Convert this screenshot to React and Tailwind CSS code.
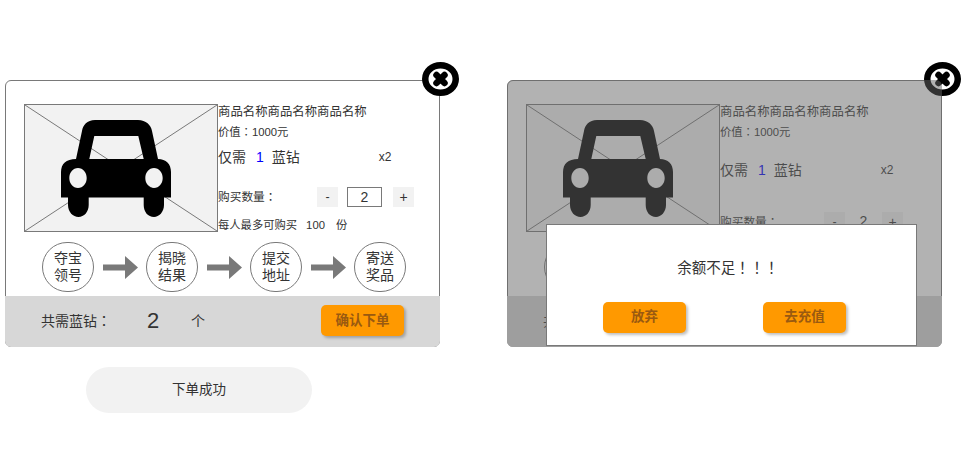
import React from 'react';

const steps = [
  ['夺宝', '领号'],
  ['揭晓', '结果'],
  ['提交', '地址'],
  ['寄送', '奖品'],
];

// the reference's full-width punctuation sits centred in its cell
const Punct = ({ children }) => <span className="font-['Noto_Sans_CJK_TC',sans-serif]">{children}</span>;

function CloseIcon() {
  return (
    <svg viewBox="0 0 37 34" className="absolute left-[416px] top-[-19px] w-[37px] h-[34px]">
      <ellipse cx="18.5" cy="17" rx="15.25" ry="13.75" fill="#fff" stroke="#000" strokeWidth="6.5" />
      <path d="M14.5 13 L22.5 21 M22.5 13 L14.5 21" stroke="#000" strokeWidth="6.5" strokeLinecap="round" />
    </svg>
  );
}

function ImagePlaceholder() {
  return (
    <div className="relative w-[194px] h-[128px] shrink-0 bg-[#f2f2f2] border border-[#797979]">
      <svg viewBox="0 0 192 126" preserveAspectRatio="none" className="absolute inset-0 w-full h-full">
        <path d="M0 0 L192 126 M192 0 L0 126" stroke="#797979" strokeWidth="1" fill="none" />
      </svg>
      <svg viewBox="0 0 194 128" className="absolute left-[-1px] top-[-1px] w-[194px] h-[128px]">
        <path
          fillRule="evenodd"
          fill="#000"
          d="M71 16 H114 C122 16 127 21 128 27 L134 55 C142 55 147 60 147 68 V93.5 H140 V101 C140 108 135 113 130 113 C124 113 119.7 108 119.7 101 V93.5 H64.7 V101 C64.7 108 60 113 54.5 113 C49 113 44 108 44 101 V93.5 H37 V68 C37 60 42 55 52 55 L58 27 C59 21 63 16 71 16 Z M70.3 32 L65.3 55 H119.7 L114.3 32 Z M54 64 C49 64 45.3 68.5 45.3 74 C45.3 79.5 49 84 54 84 C59 84 62.7 79.5 62.7 74 C62.7 68.5 59 64 54 64 Z M130 64 C125 64 121.3 68.5 121.3 74 C121.3 79.5 125 84 130 84 C135 84 138.7 79.5 138.7 74 C138.7 68.5 135 64 130 64 Z"
        />
      </svg>
    </div>
  );
}

function Arrow() {
  return (
    <svg viewBox="0 0 35 23" className="w-[35px] h-[23px] shrink-0">
      <path d="M0 8.5 H22 V0 L35 11.5 L22 23 V14.5 H0 Z" fill="#797979" />
    </svg>
  );
}

function OrderButton({ children }) {
  return (
    <button className="w-[83px] h-[31px] rounded-[5px] bg-[#ff9900] shadow-[2px_2px_3px_rgba(0,0,0,0.25)] text-[13.5px] font-bold text-[#9a5a10]">
      {children}
    </button>
  );
}

function OrderCard({ dimmed }) {
  return (
    <div className="relative w-[435px] h-[267px] rounded-[6px] border border-[#797979] bg-white text-[#333]">
      <div className="flex pt-[23px] pl-[18px] h-[160px]">
        <ImagePlaceholder />
        <div className="flex-1 text-[12.4px]">
          <div className="h-[19px] leading-[16px]">商品名称商品名称商品名称</div>
          <div className="h-[19px] leading-[16px] text-[11.3px]">价值<Punct>：</Punct>1000元</div>
          <div className={`flex items-center h-[26px] text-sm ${dimmed ? 'mt-[15px]' : 'mt-[2px]'}`}>
            <span>仅需</span>
            <span className="ml-[10px] text-[#0000ff]">1</span>
            <span className="ml-[8px]">蓝钻</span>
            <span className="ml-[79px] text-xs">x2</span>
          </div>
          <div className={`flex items-center h-[20px] ${dimmed ? 'mt-[29px]' : 'mt-[17px]'}`}>
            <span className={`leading-[18px] self-start text-[11.7px] ${dimmed ? 'w-[104px]' : 'w-[99px]'}`}>购买数量<Punct>：</Punct></span>
            <span className="w-[21px] h-[20px] bg-[#f2f2f2] text-center leading-[20px]">-</span>
            {dimmed ? (
              <span className="w-[37px] h-[20px] text-center text-sm leading-[18px]">2</span>
            ) : (
              <span className="w-[35px] h-[20px] ml-[9px] mr-[11px] text-center text-sm leading-[18px] border border-[#797979]">2</span>
            )}
            <span className="w-[21px] h-[20px] bg-[#f2f2f2] text-center text-sm leading-[20px]">+</span>
          </div>
          <div className="mt-[8px] flex h-[20px] items-center text-[11.3px]">
            <span>每人最多可购买</span>
            <span className="ml-[9px]">100</span>
            <span className="ml-[11px]">份</span>
          </div>
        </div>
      </div>
      <div className="flex items-center h-[52px] pl-[36px]">
        {steps.map((s, i) => (
          <React.Fragment key={s[0]}>
            {i > 0 && <div className="ml-[9px] mr-[8px]"><Arrow /></div>}
            <div className="w-[52px] h-[50px] shrink-0 rounded-full border border-[#797979] text-center text-sm leading-[17px] flex flex-col justify-center">
              <span>{s[0]}</span>
              <span>{s[1]}</span>
            </div>
          </React.Fragment>
        ))}
      </div>
      <div className="absolute -left-px -right-px -bottom-px h-[51px] rounded-b-[6px] bg-[#d7d7d7] flex items-center pl-[36px] pr-[36px] pb-[2px] text-sm">
        <span className="w-[106px]">共需蓝钻<Punct>：</Punct></span>
        <span className="w-[44px] text-[22px]">2</span>
        <span>个</span>
        <div className="ml-auto"><OrderButton>确认下单</OrderButton></div>
      </div>
      <CloseIcon />
      {dimmed && (
        <>
          <div className="absolute -inset-px rounded-[6px] bg-[#666666]/50" />
          <div className="absolute left-[38px] top-[143px] w-[371px] h-[122px] border border-[#797979] bg-white">
            <div className="pt-[32px] pr-[7px] text-center text-[14.5px] leading-[20px]">余额不足<Punct>！！！</Punct></div>
            <div className="flex gap-[77px] pt-[24px] pl-[56px]">
              <OrderButton>放弃</OrderButton>
              <OrderButton>去充值</OrderButton>
            </div>
          </div>
        </>
      )}
    </div>
  );
}

export default function App() {
  return (
    <div className="w-[966px] h-[475px] bg-white pt-[80px] pl-[5px] flex gap-[67px] font-['Liberation_Sans','Noto_Sans_CJK_SC',sans-serif]">
      <div>
        <OrderCard />
        <div className="mt-[20px] ml-[81px] w-[226px] h-[46px] rounded-[23px] bg-[#f2f2f2] flex items-center justify-center text-[13.5px] text-[#333]">
          下单成功
        </div>
      </div>
      <div>
        <OrderCard dimmed />
      </div>
    </div>
  );
}
